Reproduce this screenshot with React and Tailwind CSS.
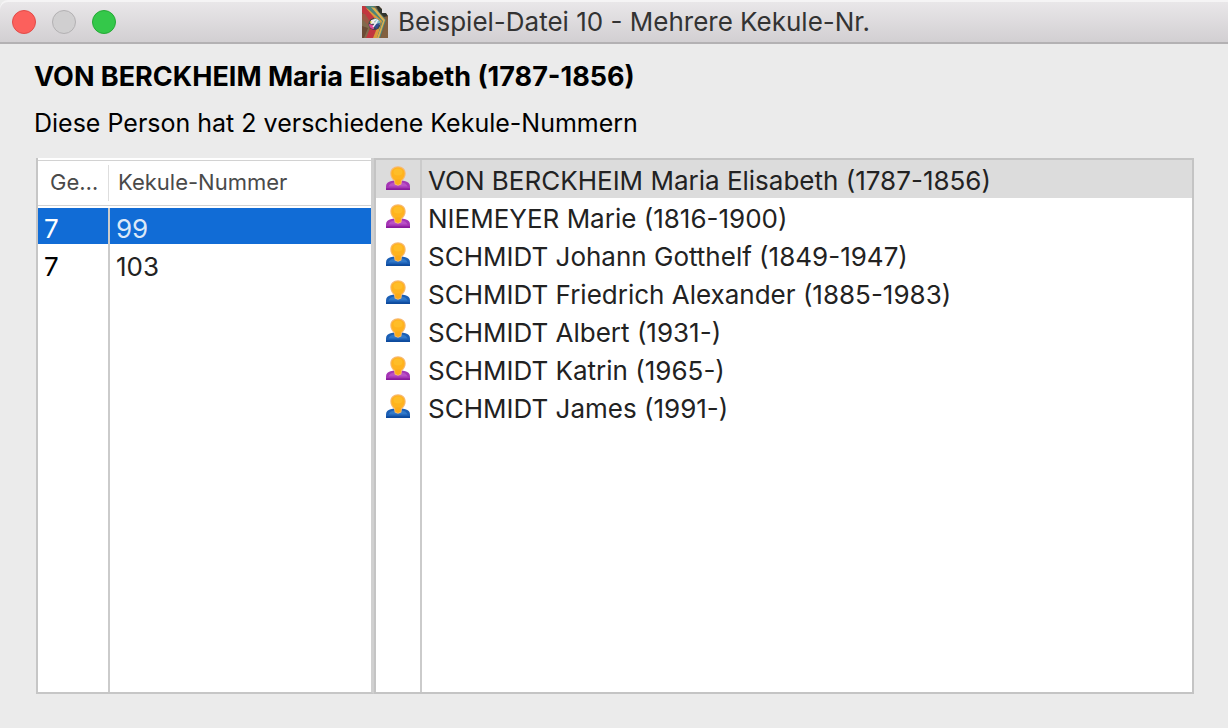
const numbers = [
  { generation: "7", kekule: "99", selected: true },
  { generation: "7", kekule: "103", selected: false },
];

const people = [
  { name: "VON BERCKHEIM Maria Elisabeth (1787-1856)", sex: "f", selected: true },
  { name: "NIEMEYER Marie (1816-1900)", sex: "f" },
  { name: "SCHMIDT Johann Gotthelf (1849-1947)", sex: "m" },
  { name: "SCHMIDT Friedrich Alexander (1885-1983)", sex: "m" },
  { name: "SCHMIDT Albert (1931-)", sex: "m" },
  { name: "SCHMIDT Katrin (1965-)", sex: "f" },
  { name: "SCHMIDT James (1991-)", sex: "m" },
];

function PersonIcon({ sex }) {
  const female = sex === "f";
  const dark = female ? "#8a1c9c" : "#0d4a9c";
  const mid = female ? "#a535b5" : "#1c5fb4";
  const light = female ? "#b950c6" : "#3179c9";
  return (
    <svg className="block size-6" viewBox="0 0 24 24" role="img" aria-label={female ? "Frau" : "Mann"}>
      <path d="M0 24v-3.500C0 17.500 1.800 15.800 4.500 15.200L8 14.500h8l3.500.7c2.700.6 4.500 2.300 4.500 5.300V24z" fill={mid} />
      <path d="M2.500 20.500c.8-2.500 2.500-3.500 5.500-4h8c3 .5 4.700 1.500 5.500 4z" fill={light} />
      <path d="M0 22.300h24V24H0z" fill={dark} />
      <path d="M12 .3c4.600 0 7.700 2.900 7.700 7.200 0 3.400-1.700 5.500-3.700 7.500l-.7 3.500L12 19.700l-3.300-1.200L8 15c-2-2-3.700-4.100-3.700-7.500C4.300 3.200 7.400.3 12 .3z" fill="#f8b970" />
      <path d="M12 1.500c3.900 0 6.600 2.500 6.600 6 0 3-1.500 5-3.600 6.800l-.5 3.400L12 18.800l-2.500-1.100-.5-3.400C6.900 12.500 5.400 10.500 5.400 7.500c0-3.500 2.700-6 6.600-6z" fill="#ffb31e" />
      <ellipse cx="12" cy="6" rx="4.500" ry="3.500" fill="#ffbd28" />
      <path d="M9.500 13.500h5v4L12 18.800l-2.500-1.300z" fill="#fcab18" />
    </svg>
  );
}

function FileIcon() {
  return (
    <svg className="block h-8 w-[26px]" viewBox="0 0 26 32" aria-hidden="true">
      <clipPath id="sheet">
        <path d="M0 0h17l3 3v4h4l2 3v22H0z" />
      </clipPath>
      <g clipPath="url(#sheet)">
        <path d="M0 0h26v32H0z" fill="#7d5c3e" />
        <path d="M0 9l8 8-2 15H0z" fill="#816a4c" />
        <path d="M0 20l6 2-4 10H0z" fill="#6b4b35" />
        <path d="M0 0h3l16 14-5 18H4l5-12L0 6z" fill="#c2373f" />
        <path d="M0 8l3 0 6 9-3 2-6-6z" fill="#9a5a45" />
        <path d="M4 2l5 2 12 11-6 17h-4l6-15z" fill="#d99b3c" />
        <path d="M3 0h9l12 14-6 18h-3l5-17L6 3z" fill="#4d857b" />
        <path d="M9 1l4 1 10 12-6 18h-2l6-17z" fill="#dcae4f" />
        <path d="M14 0h3l3 3v4h4l2 3-4 1-5-5z" fill="#30352f" />
        <path d="M26 14v18h-7l5-17z" fill="#82603f" />
      </g>
      <circle cx="12.500" cy="18" r="6" fill="#39454f" />
      <path d="M12 12.500c4-.5 7 2 6 6l-5 1z" fill="#82bdc5" />
      <path d="M7.500 16l4-3 1 3-3 2z" fill="#e9d447" />
      <path d="M7 18l4 1 1 4c-3 0-5-2-5-5z" fill="#e54895" />
      <path d="M13 18l5-1-3 6-3-2z" fill="#344c90" />
      <path d="M9 15l4-1-3 3h4l-3 4M14 16l2-2" fill="none" stroke="#f3edf3" strokeWidth="1.500" />
    </svg>
  );
}

function TitleBar() {
  return (
    <header className="flex h-11 shrink-0 items-center rounded-tl-lg bg-linear-to-b from-[#eae8ea] to-[#d1ced1] pr-2 shadow-[inset_0_2px_0_#f5f4f5,inset_0_-2px_0_#b3b1b3]">
      <div className="flex flex-1 gap-4 pl-3">
        <button type="button" aria-label="Schließen" className="size-6 rounded-full border border-[#e24b48] bg-[#fc605c]" />
        <button type="button" aria-label="Minimieren" disabled className="size-6 rounded-full border border-[#b3b1b3] bg-[#d0cfd0]" />
        <button type="button" aria-label="Vergrößern" className="size-6 rounded-full border border-[#25a936] bg-[#34c84a]" />
      </div>
      <div className="flex items-center gap-[10px]">
        <FileIcon />
        <span className="text-[26px] leading-8 text-[#333]">Beispiel-Datei 10 - Mehrere Kekule-Nr.</span>
      </div>
      <div className="flex-1" />
    </header>
  );
}

function NumberTable() {
  return (
    <div className="flex w-[338px] shrink-0 border-r-3 border-b-2 border-l-2 border-[#c6c6c6] border-r-[#d0d0d0] bg-white">
      <table className="w-full table-fixed border-separate border-spacing-0 text-left">
        <colgroup>
          <col className="w-[70px]" />
          <col />
        </colgroup>
        <thead className="text-[22px] leading-8 text-[#4a4a4a]">
          <tr className="h-[50px]">
            <th className="p-0 font-normal">
              <div className="my-[2px] h-[46px] border-y border-[#d2d2d2] pt-[5px] pl-3">Ge…</div>
            </th>
            <th className="p-0 font-normal">
              <div className="my-[2px] h-[46px] border-y border-[#d2d2d2] pt-1">
                <div className="h-9 border-l border-[#dedede] pt-px pl-[9px]">Kekule-Nummer</div>
              </div>
            </th>
          </tr>
        </thead>
        <tbody className="text-[26px] leading-9">
          {numbers.map((n) => (
            <tr key={n.kekule} className="h-[38px]" aria-selected={n.selected}>
              <td className="p-0 align-top">
                <div className={n.selected ? "h-9 bg-[#116cd6] pt-[3px] pl-[6px] text-white" : "h-9 pt-[3px] pl-[6px] text-black"}>
                  {n.generation}
                </div>
              </td>
              <td className="border-l-2 border-[#cbcbcb] p-0 align-top">
                <div className={n.selected ? "h-9 bg-[#116cd6] pt-[3px] pl-[6px] text-[#dce8f8]" : "h-9 pt-[3px] pl-[6px] text-[#222]"}>
                  {n.kekule}
                </div>
              </td>
            </tr>
          ))}
          <tr>
            <td className="p-0" />
            <td className="border-l-2 border-[#cbcbcb] p-0" />
          </tr>
        </tbody>
      </table>
    </div>
  );
}

function LineTable() {
  return (
    <div className="flex flex-1 border-2 border-[#c4c4c4] bg-white">
      <table className="w-full table-fixed border-separate border-spacing-0 text-left text-[26px] leading-[34px] text-[#222]">
        <colgroup>
          <col className="w-[44px]" />
          <col />
        </colgroup>
        <tbody>
          {people.map((p) => (
            <tr key={p.name} className={p.selected ? "h-[38px] bg-[#dcdcdc]" : "h-[38px]"} aria-selected={!!p.selected}>
              <td className="p-0 pt-[6px] pl-[10px] align-top">
                <PersonIcon sex={p.sex} />
              </td>
              <td className="truncate border-l-2 border-[#cbcbcb] p-0 pt-1 pl-[6px]">{p.name}</td>
            </tr>
          ))}
          <tr>
            <td className="p-0" />
            <td className="border-l-2 border-[#cbcbcb] p-0" />
          </tr>
        </tbody>
      </table>
    </div>
  );
}

export default function App() {
  return (
    <div className="flex min-h-screen flex-col bg-[#ebebeb] font-['Inter',sans-serif]">
      <TitleBar />
      <main className="flex flex-1 flex-col px-[34px] pt-[15px] pb-[34px] text-black">
        <h1 className="text-[27px] leading-9 font-bold">VON BERCKHEIM Maria Elisabeth (1787-1856)</h1>
        <p className="mt-[10px] text-[25px] leading-9">Diese Person hat 2 verschiedene Kekule-Nummern</p>
        <div className="mt-[17px] ml-[2px] flex flex-1">
          <NumberTable />
          <LineTable />
        </div>
      </main>
    </div>
  );
}
